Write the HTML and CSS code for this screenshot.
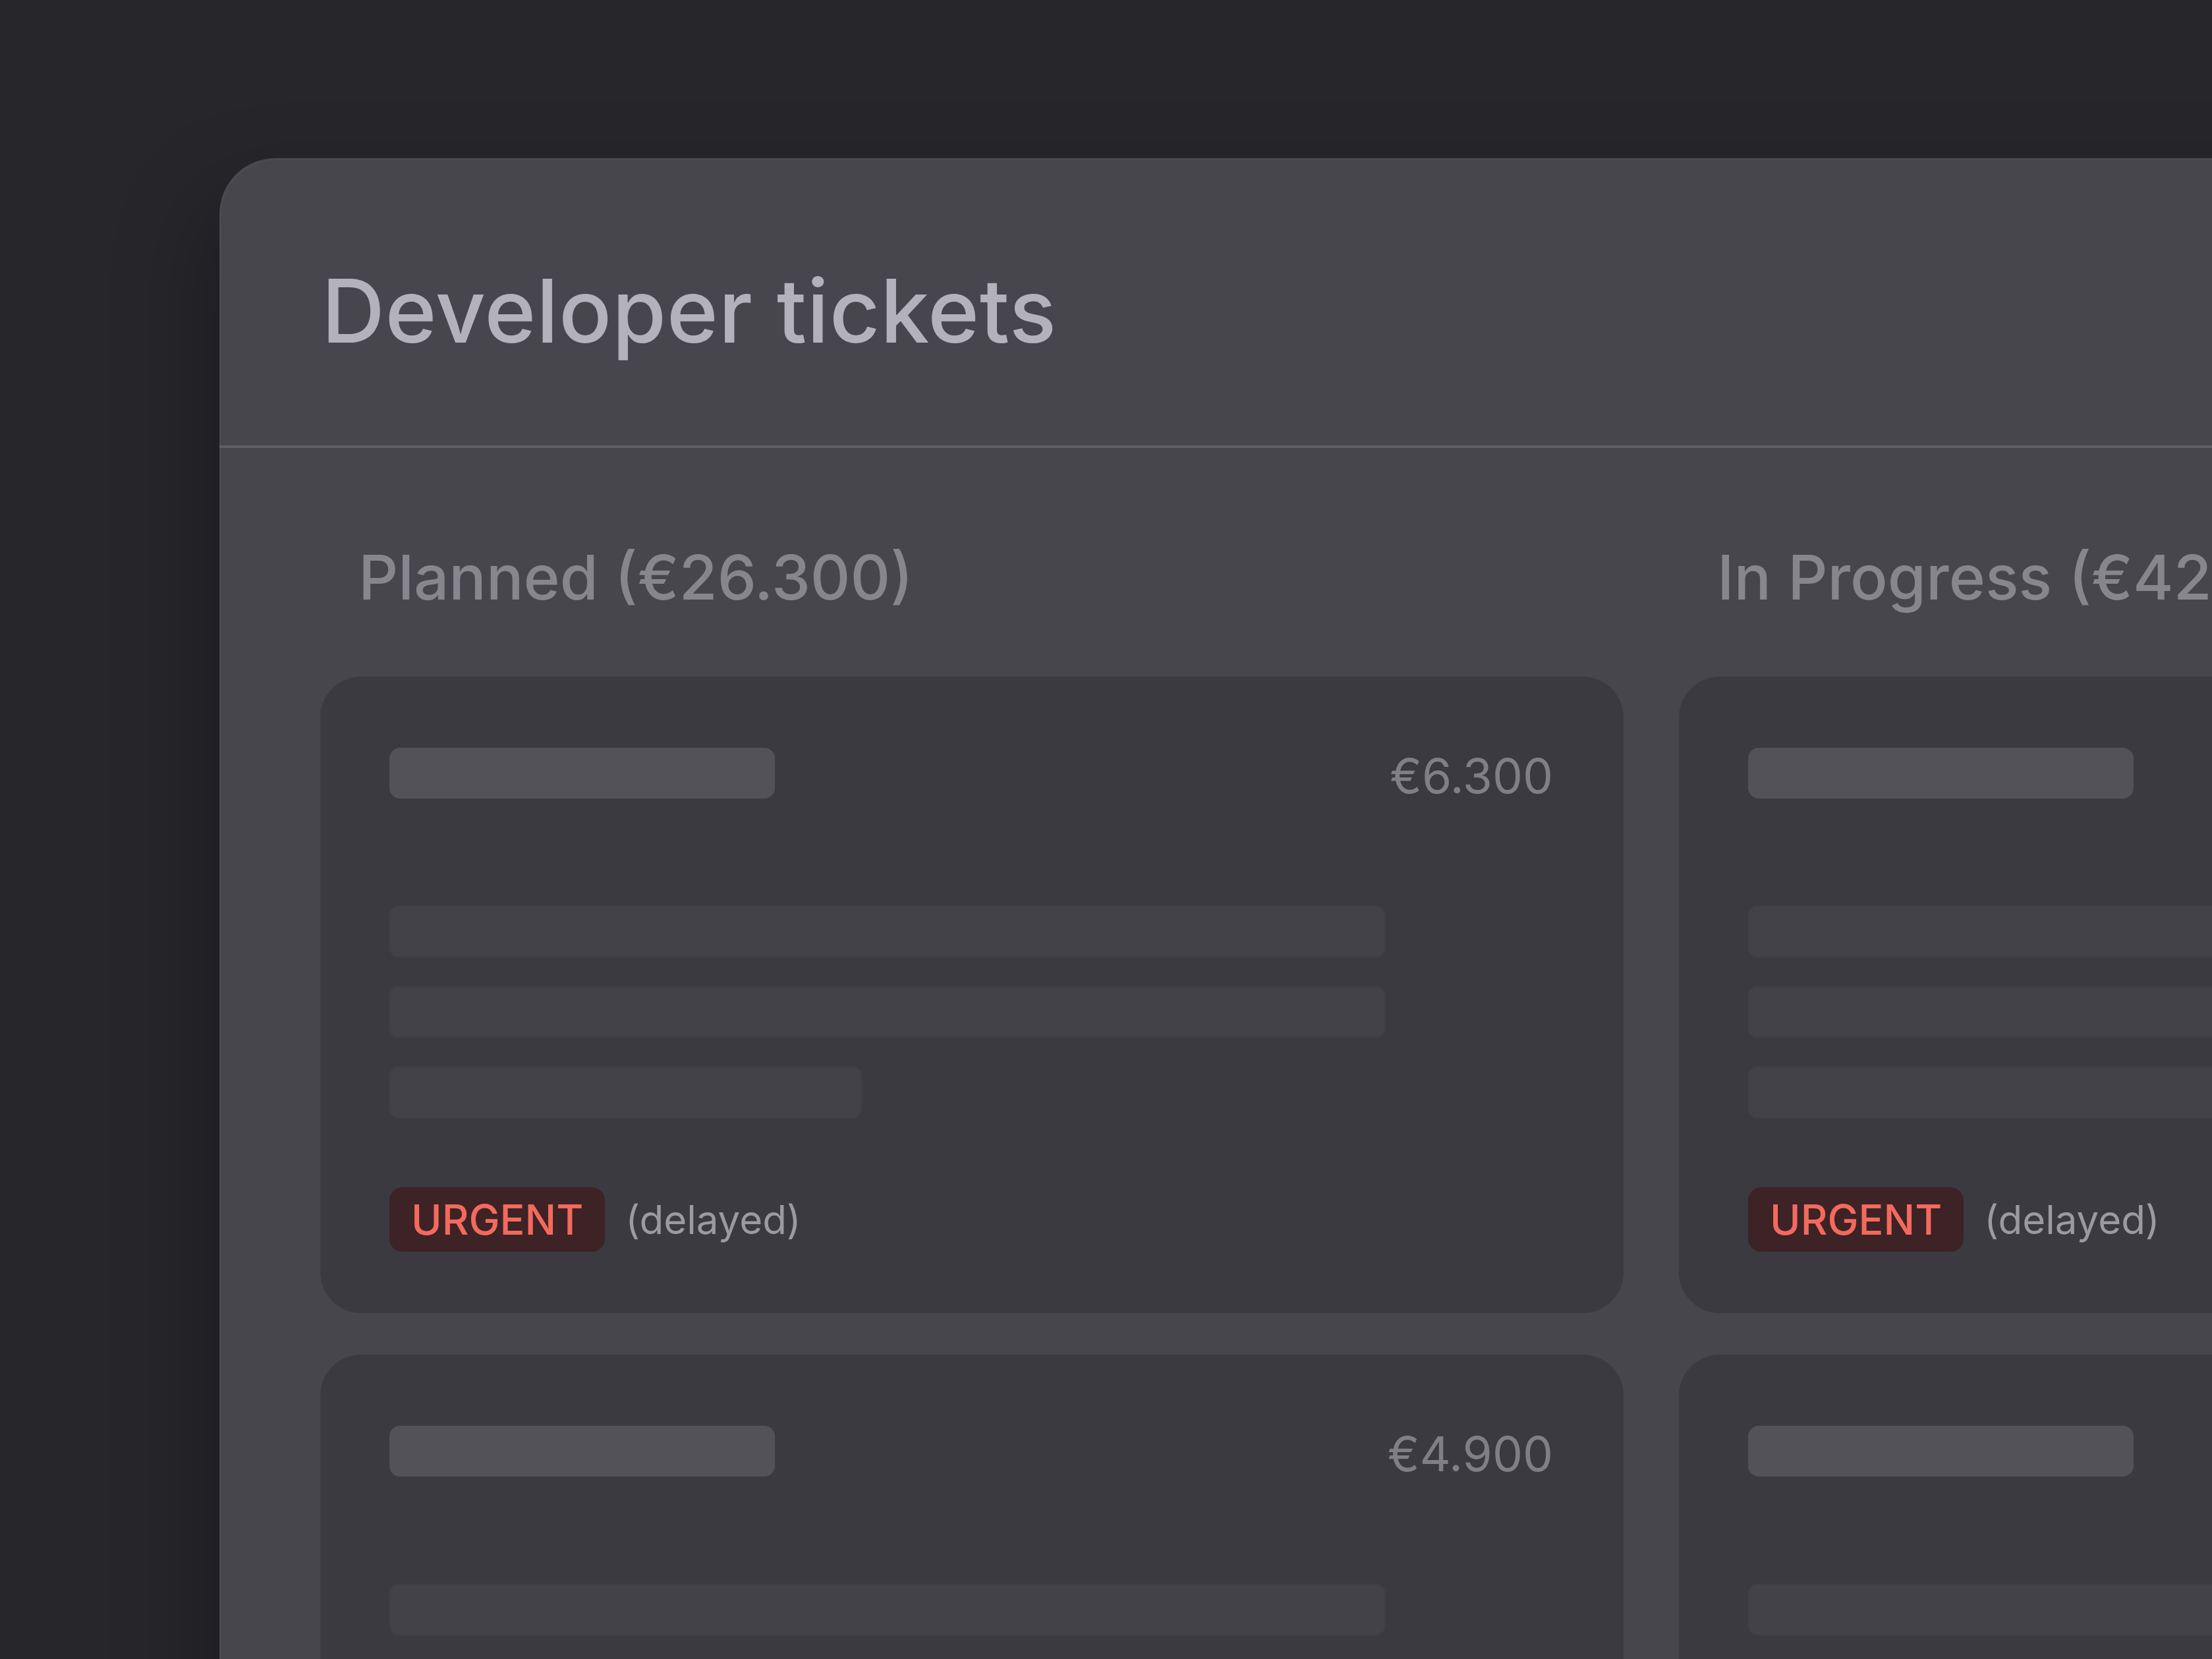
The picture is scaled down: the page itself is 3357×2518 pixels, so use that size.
FILE: index.html
```html
<!DOCTYPE html>
<html lang="en">
<head>
<meta charset="utf-8">
<title>Developer tickets</title>
<link rel="stylesheet" href="styles.css">
</head>
<body>
<main class="panel">
  <header class="panel-head">
    <h1 class="title">Developer tickets</h1>
  </header>
  <section class="board">
    <div class="column">
      <h2 class="column-title">Planned (€26.300)</h2>
      <div class="cards">
        <article class="card">
          <div class="card-top">
            <div class="sk-title"></div>
            <span class="price">€6.300</span>
          </div>
          <div class="sk-lines">
            <div class="sk-line"></div>
            <div class="sk-line"></div>
            <div class="sk-line short"></div>
          </div>
          <div class="card-foot">
            <span class="badge">URGENT</span>
            <span class="note">(delayed)</span>
          </div>
        </article>
        <article class="card">
          <div class="card-top">
            <div class="sk-title"></div>
            <span class="price">€4.900</span>
          </div>
          <div class="sk-lines">
            <div class="sk-line"></div>
            <div class="sk-line"></div>
            <div class="sk-line short"></div>
          </div>
          <div class="card-foot">
            <span class="badge">URGENT</span>
            <span class="note">(delayed)</span>
          </div>
        </article>
      </div>
    </div>
    <div class="column">
      <h2 class="column-title">In Progress (€42.100)</h2>
      <div class="cards">
        <article class="card">
          <div class="card-top">
            <div class="sk-title"></div>
            <span class="price">€8.200</span>
          </div>
          <div class="sk-lines">
            <div class="sk-line"></div>
            <div class="sk-line"></div>
            <div class="sk-line short"></div>
          </div>
          <div class="card-foot">
            <span class="badge">URGENT</span>
            <span class="note">(delayed)</span>
          </div>
        </article>
        <article class="card">
          <div class="card-top">
            <div class="sk-title"></div>
            <span class="price">€5.600</span>
          </div>
          <div class="sk-lines">
            <div class="sk-line"></div>
            <div class="sk-line"></div>
            <div class="sk-line short"></div>
          </div>
          <div class="card-foot">
            <span class="badge">URGENT</span>
            <span class="note">(delayed)</span>
          </div>
        </article>
      </div>
    </div>
  </section>
</main>
</body>
</html>
```
FILE: styles.css
```css
html, body {
  margin: 0;
  padding: 0;
}

body {
  width: 3357px;
  height: 2518px;
  overflow: hidden;
  background: #27262b;
  font-family: Inter, "Liberation Sans", sans-serif;
}

.panel {
  margin: 240px 0 0 333px;
  width: 4500px;
  min-height: 2600px;
  background: #47464c;
  border-radius: 85px 0 0 0;
  box-shadow: inset 3px 3px 0 rgba(255, 255, 255, 0.025),
              -20px 60px 140px rgba(0, 0, 0, 0.28);
}

.panel-head {
  padding: 165px 0 138px 155px;
  border-bottom: 4px solid #5f5e64;
}

.title {
  margin: 0;
  font-size: 133px;
  line-height: 1;
  font-weight: 500;
  color: #b3b2ba;
  letter-spacing: 0.6px;
}

.board {
  display: grid;
  grid-template-columns: 1978px 1978px;
  column-gap: 84px;
  padding: 149px 0 0 153px;
}

.column-title {
  margin: 0 0 104px 0;
  padding-left: 58px;
  font-size: 94px;
  line-height: 1;
  font-weight: 500;
  color: #87868d;
  letter-spacing: 0;
  white-space: nowrap;
}

.cards {
  display: flex;
  flex-direction: column;
  gap: 63px;
}

.card {
  background: #3b3a40;
  border-radius: 62px;
  padding: 108px 107px 93px 105px;
}

.card-top {
  display: flex;
  justify-content: space-between;
  align-items: center;
  height: 77px;
}

.sk-title {
  width: 585px;
  height: 77px;
  border-radius: 16px;
  background: #535258;
}

.price {
  margin-top: 8px;
  font-size: 73px;
  line-height: 1;
  font-weight: 400;
  color: #807f85;
}

.sk-lines {
  margin-top: 163px;
  display: flex;
  flex-direction: column;
  gap: 44px;
}

.sk-line {
  width: 1511px;
  height: 78px;
  border-radius: 14px;
  background: #434248;
  filter: blur(1px);
}

.sk-line.short {
  width: 717px;
}

.card-foot {
  margin-top: 105px;
  display: flex;
  align-items: center;
  gap: 31px;
  height: 98px;
}

.badge {
  display: flex;
  align-items: center;
  height: 98px;
  padding: 0 33px;
  border-radius: 20px;
  background: #3d2226;
  color: #f26a5c;
  font-size: 63px;
  line-height: 1;
  font-weight: 500;
}

.note {
  font-size: 60px;
  line-height: 1;
  font-weight: 400;
  color: #9b9aa1;
}
```
